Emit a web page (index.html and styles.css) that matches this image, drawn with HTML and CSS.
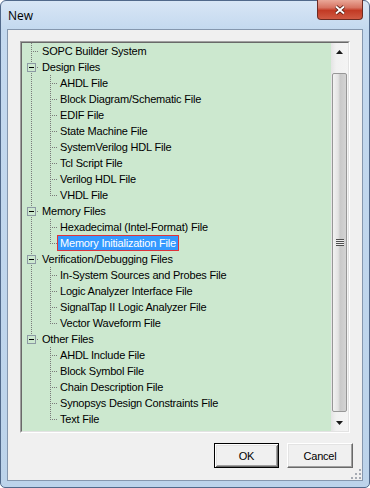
FILE: index.html
```html
<!DOCTYPE html>
<html lang="en">
<head>
    <meta charset="UTF-8">
    <title>New</title>
    <link rel="stylesheet" href="styles.css">
</head>
<body>
    <div class="window">
        <div class="title-bar">
            <span class="title">New</span>
            <button class="close-btn" title="Close">
                <svg width="12" height="10" viewBox="0 0 12 10">
                    <path d="M2 1.5 L10 8.5 M10 1.5 L2 8.5" stroke="#4a1208" stroke-width="3.6" fill="none"/>
                    <path d="M2 1.5 L10 8.5 M10 1.5 L2 8.5" stroke="#ffffff" stroke-width="2" fill="none"/>
                </svg>
            </button>
        </div>

        <div class="client">
            <div class="tree-box">
                <div class="tree-frame">
                    <ul class="tree">
                        <li><div class="node"><span class="label">SOPC Builder System</span></div></li>
                        <li>
                            <div class="node"><span class="toggle"></span><span class="label">Design Files</span></div>
                            <ul>
                                <li><div class="node"><span class="label">AHDL File</span></div></li>
                                <li><div class="node"><span class="label">Block Diagram/Schematic File</span></div></li>
                                <li><div class="node"><span class="label">EDIF File</span></div></li>
                                <li><div class="node"><span class="label">State Machine File</span></div></li>
                                <li><div class="node"><span class="label">SystemVerilog HDL File</span></div></li>
                                <li><div class="node"><span class="label">Tcl Script File</span></div></li>
                                <li><div class="node"><span class="label">Verilog HDL File</span></div></li>
                                <li><div class="node"><span class="label">VHDL File</span></div></li>
                            </ul>
                        </li>
                        <li>
                            <div class="node"><span class="toggle"></span><span class="label">Memory Files</span></div>
                            <ul>
                                <li><div class="node"><span class="label">Hexadecimal (Intel-Format) File</span></div></li>
                                <li><div class="node"><span class="label selected">Memory Initialization File</span></div></li>
                            </ul>
                        </li>
                        <li>
                            <div class="node"><span class="toggle"></span><span class="label">Verification/Debugging Files</span></div>
                            <ul>
                                <li><div class="node"><span class="label">In-System Sources and Probes File</span></div></li>
                                <li><div class="node"><span class="label">Logic Analyzer Interface File</span></div></li>
                                <li><div class="node"><span class="label">SignalTap II Logic Analyzer File</span></div></li>
                                <li><div class="node"><span class="label">Vector Waveform File</span></div></li>
                            </ul>
                        </li>
                        <li>
                            <div class="node"><span class="toggle"></span><span class="label">Other Files</span></div>
                            <ul>
                                <li><div class="node"><span class="label">AHDL Include File</span></div></li>
                                <li><div class="node"><span class="label">Block Symbol File</span></div></li>
                                <li><div class="node"><span class="label">Chain Description File</span></div></li>
                                <li><div class="node"><span class="label">Synopsys Design Constraints File</span></div></li>
                                <li><div class="node"><span class="label">Text File</span></div></li>
                            </ul>
                        </li>
                    </ul>

                    <div class="scrollbar">
                        <div class="arrow">
                            <svg width="7" height="4" viewBox="0 0 7 4"><path d="M0 4 L3.5 0 L7 4 Z" fill="#1a1a1a"/></svg>
                        </div>
                        <div class="track">
                            <div class="thumb"><span class="grip"></span></div>
                        </div>
                        <div class="arrow">
                            <svg width="7" height="4" viewBox="0 0 7 4"><path d="M0 0 L7 0 L3.5 4 Z" fill="#1a1a1a"/></svg>
                        </div>
                    </div>
                </div>
            </div>

            <div class="buttons">
                <button class="btn default">OK</button>
                <button class="btn">Cancel</button>
            </div>

            <svg class="size-grip" width="12" height="12" viewBox="0 0 12 12">
                <rect x="9" y="1" width="2" height="2" fill="#a5aab3"/>
                <rect x="9" y="5" width="2" height="2" fill="#a5aab3"/>
                <rect x="5" y="5" width="2" height="2" fill="#a5aab3"/>
                <rect x="9" y="9" width="2" height="2" fill="#a5aab3"/>
                <rect x="5" y="9" width="2" height="2" fill="#a5aab3"/>
                <rect x="1" y="9" width="2" height="2" fill="#a5aab3"/>
            </svg>
        </div>
    </div>
</body>
</html>
```

FILE: styles.css
```css
body {
    margin: 0;
    background: #ffffff;
    font-family: "Liberation Sans", Arial, sans-serif;
}

.window {
    width: 370px;
    height: 488px;
    box-sizing: border-box;
    border: 1px solid #51698a;
    border-radius: 6px 6px 5px 5px;
    background: linear-gradient(#d8e6f5, #c4d9ef 28px, #bcd3ea);
    padding: 0 6px 6px;
    display: flex;
    flex-direction: column;
}

.title-bar {
    height: 28px;
    display: flex;
    align-items: flex-start;
}

.title {
    font-family: "Open Sans", sans-serif;
    font-size: 12px;
    line-height: 17px;
    margin: 6px 0 0 1px;
    color: #000;
}

.close-btn {
    margin: -1px 0 0 auto;
    width: 46px;
    height: 20px;
    padding: 0;
    border: 1px solid #6d2b22;
    border-top: none;
    border-radius: 0 0 4px 4px;
    background: linear-gradient(#eaa898, #d77462 40%, #c23a24 55%, #d05a43);
    display: flex;
    align-items: center;
    justify-content: center;
}

.client {
    flex: 1;
    position: relative;
    border: 1px solid #8597ae;
    background: #f0f0f0;
    padding: 11px 9px 12px 12px;
    display: flex;
    flex-direction: column;
}

.tree-box {
    height: 392px;
    margin-right: 3px;
    box-sizing: border-box;
    border: 1px solid;
    border-color: #a0a0a0 #ffffff #ffffff #a0a0a0;
}

.tree-frame {
    height: 100%;
    box-sizing: border-box;
    border: 1px solid;
    border-color: #696969 #e3e3e3 #e3e3e3 #696969;
    display: flex;
}

/* tree view */

.tree {
    flex: 1;
    margin: 0;
    padding: 0;
    list-style: none;
    background: #cce8cf;
    overflow: hidden;
    font-size: 11px;
    letter-spacing: -0.2px;
    color: #000;
}

.tree ul {
    margin: 0;
    padding: 0;
    list-style: none;
}

.tree > li {
    background: repeating-linear-gradient(to bottom, #7a7a7a 0 1px, transparent 1px 2px) 9px 0 / 1px 100% no-repeat;
}

.tree > li:last-child {
    background-size: 1px 9px;
}

.tree ul > li {
    background: repeating-linear-gradient(to bottom, #7a7a7a 0 1px, transparent 1px 2px) 28px 0 / 1px 100% no-repeat;
}

.tree ul > li:last-child {
    background-size: 1px 9px;
}

.node {
    height: 16px;
    display: flex;
    align-items: center;
    padding-left: 17px;
    background: repeating-linear-gradient(to right, #7a7a7a 0 1px, transparent 1px 2px) 9px 8px / 8px 1px no-repeat;
}

.tree ul .node {
    padding-left: 35px;
    background-position: 28px 8px;
    background-size: 7px 1px;
}

.toggle {
    width: 9px;
    height: 9px;
    box-sizing: border-box;
    margin: 0 3px 0 -12px;
    border: 1px solid #8c9aa3;
    background: linear-gradient(#000, #000) center / 5px 1px no-repeat, #cce8cf;
}

.label {
    height: 16px;
    line-height: 16px;
    padding: 0 3px;
    white-space: nowrap;
    box-sizing: border-box;
}

.label.selected {
    background: #3399ff;
    color: #fff;
    border: 1px solid #e0323a;
    padding: 0 2px;
    line-height: 14px;
}

/* scrollbar */

.scrollbar {
    width: 17px;
    display: flex;
    flex-direction: column;
    background: linear-gradient(to right, #e4e4e4, #f1f1f1 30%, #f4f4f4);
}

.arrow {
    height: 17px;
    display: flex;
    align-items: center;
    justify-content: center;
}

.track {
    flex: 1;
    padding-top: 13px;
}

.thumb {
    height: 339px;
    box-sizing: border-box;
    margin: 0 1px;
    border: 1px solid #979797;
    border-radius: 2px;
    background: linear-gradient(to right, #f2f2f2, #e2e2e2 40%, #c9c9c9 55%, #d3d3d3);
    display: flex;
    align-items: center;
    justify-content: center;
}

.grip {
    width: 8px;
    height: 7px;
    background: repeating-linear-gradient(to bottom, #4e4e4e 0 1px, #eeeeee 1px 2px);
}

/* buttons */

.buttons {
    margin-top: 10px;
    display: flex;
    justify-content: flex-end;
    gap: 8px;
}

.btn {
    width: 66px;
    height: 25px;
    padding: 0;
    font-family: "Liberation Sans", Arial, sans-serif;
    font-size: 11px;
    letter-spacing: -0.2px;
    color: #000;
    background: #f0f0f0;
    border: 1px solid;
    border-color: #ffffff #696969 #696969 #ffffff;
    box-shadow: inset -1px -1px #a0a0a0, inset 1px 1px #e3e3e3;
}

.btn.default {
    width: 65px;
    border-color: #000;
    box-shadow: inset 1px 1px #ffffff, inset -1px -1px #696969, inset 2px 2px #e3e3e3, inset -2px -2px #a0a0a0;
}

.size-grip {
    position: absolute;
    right: 0;
    bottom: 0;
}
```
